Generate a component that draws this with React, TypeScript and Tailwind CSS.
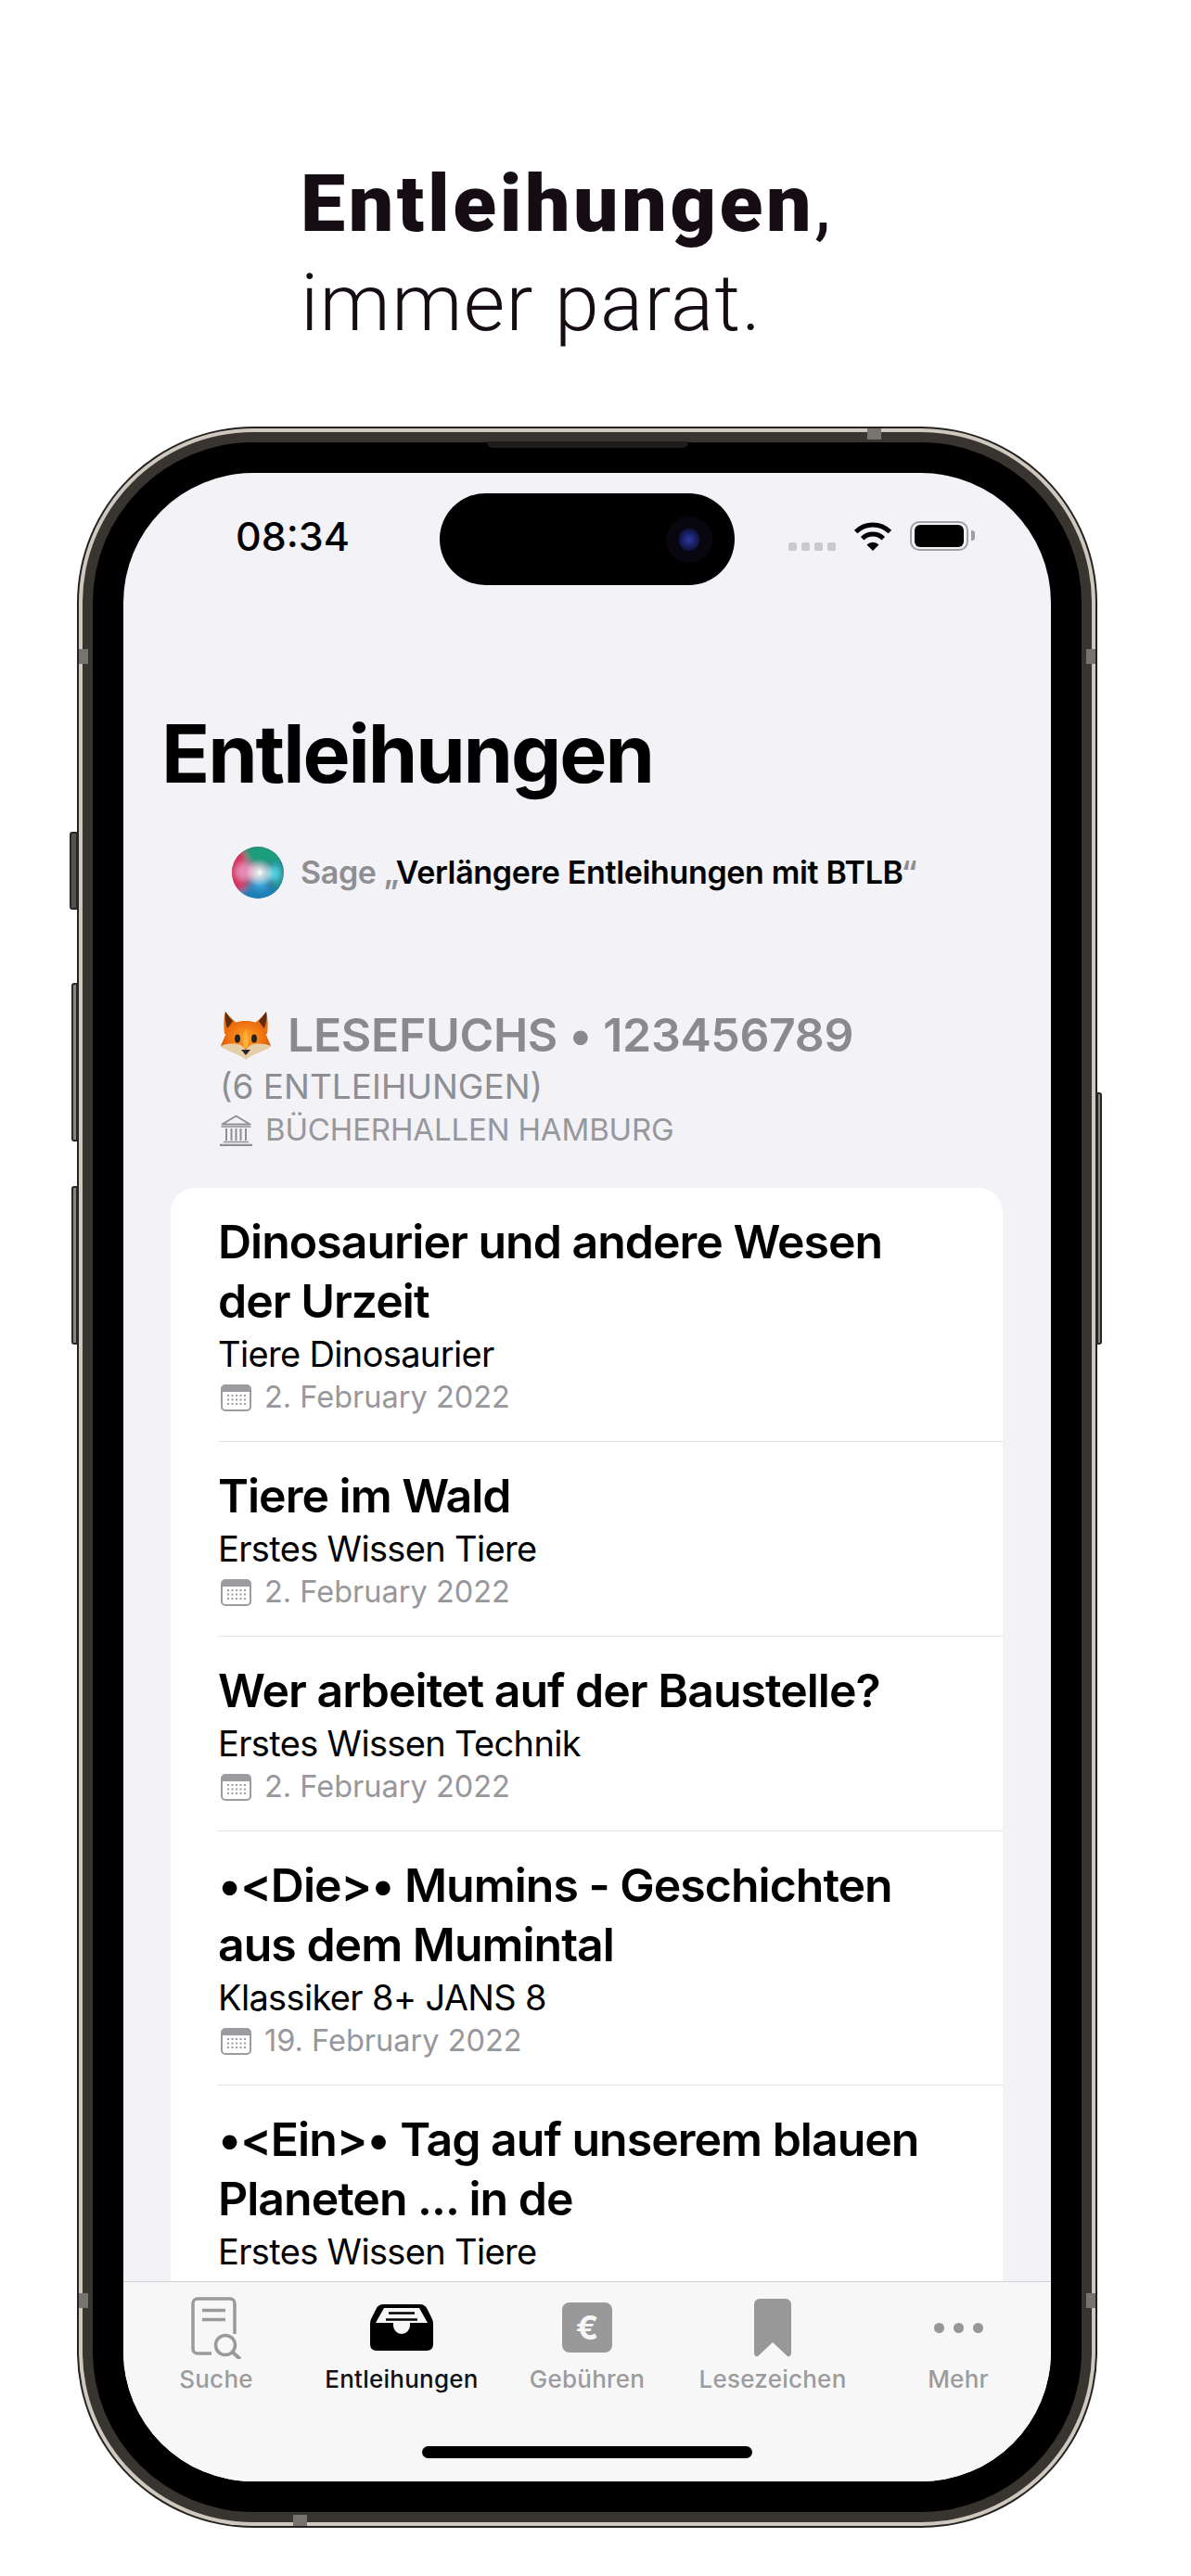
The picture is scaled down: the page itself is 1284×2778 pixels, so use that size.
type Loan = {
  title: string;
  shelf: string;
  date: string;
};

const loans: Loan[] = [
  { title: "Dinosaurier und andere Wesen der Urzeit", shelf: "Tiere Dinosaurier", date: "2. February 2022" },
  { title: "Tiere im Wald", shelf: "Erstes Wissen Tiere", date: "2. February 2022" },
  { title: "Wer arbeitet auf der Baustelle?", shelf: "Erstes Wissen Technik", date: "2. February 2022" },
  { title: "•<Die>• Mumins - Geschichten aus dem Mumintal", shelf: "Klassiker 8+ JANS 8", date: "19. February 2022" },
  { title: "•<Ein>• Tag auf unserem blauen Planeten ... in de", shelf: "Erstes Wissen Tiere", date: "2. February 2022" },
];

const CalendarIcon = () => (
  <svg width="33" height="29" viewBox="0 0 33 29" className="ml-[3px] shrink-0">
    <rect x="1" y="1" width="31" height="27" rx="4" fill="#fff" stroke="#9b9ba0" strokeWidth="2" />
    <path d="M1 5a4 4 0 0 1 4-4h23a4 4 0 0 1 4 4v3H1z" fill="#9b9ba0" />
    {[12, 16.5, 21].map((y) =>
      [8, 12.5, 17, 21.5, 26].map((x) => <rect key={`${x}-${y}`} x={x - 1} y={y - 1} width="2" height="2" fill="#9b9ba0" />),
    )}
  </svg>
);

const BankIcon = () => (
  <svg width="35" height="34" viewBox="0 0 35 34" fill="none" stroke="#8e8e93" className="shrink-0">
    <path d="M2.5 10.5 17.5 1.5l15 9z" strokeWidth="2" strokeLinejoin="round" />
    <path d="M1.5 13h32" strokeWidth="1.5" />
    <path d="M7 15v13M12.5 15v13M17.5 15v13M22.5 15v13M28 15v13" strokeWidth="2" />
    <path d="M4 29.500h27" strokeWidth="1.500" />
    <path d="M0 33h35" strokeWidth="2.500" />
  </svg>
);

const FoxIcon = () => (
  <svg width="56" height="52" viewBox="0 0 56 52" className="shrink-0">
    <defs>
      <radialGradient id="foxHead" cx="50%" cy="42%" r="58%">
        <stop offset="0%" stopColor="#ffa126" />
        <stop offset="65%" stopColor="#ee6f0e" />
        <stop offset="100%" stopColor="#c9500a" />
      </radialGradient>
    </defs>
    <path d="M6 0c3 4 7 8 12 12h20c5-4 9-8 12-12 2 8 2 16 1 24H5C4 16 4 8 6 0z" fill="#e9700f" />
    <path d="M6 0c3 4 5 7 8 10-2 3-4 6-6 8C6 12 5 6 6 0zM50 0c-3 4-5 7-8 10 2 3 4 6 6 8 2-6 3-12 2-18z" fill="#5e2d10" />
    <path d="M28 10c8 0 14 2 18 7 3 5 6 13 9 20-6 5-17 7-27 14C18 44 7 42 1 37c3-7 6-15 9-20 4-5 10-7 18-7z" fill="url(#foxHead)" />
    <path d="M1 37c7-3 15-3 22-1l5 5 5-5c7-2 15-2 22 1-5 5-18 7-27 15C19 44 6 42 1 37z" fill="#e4cfa8" />
    <path d="M28 19c2 5 4 12 2 20h-4c-2-8 0-15 2-20z" fill="#fbb13c" />
    <ellipse cx="19" cy="29" rx="3" ry="4.500" fill="#222" />
    <ellipse cx="37" cy="29" rx="3" ry="4.500" fill="#222" />
    <path d="M23 41h10l-5 6z" fill="#2b2522" />
  </svg>
);

const SiriOrb = () => (
  <svg width="56" height="56" viewBox="0 0 56 56" className="shrink-0">
    <defs>
      <clipPath id="orbClip">
        <circle cx="28" cy="28" r="28" />
      </clipPath>
      <filter id="orbBlur">
        <feGaussianBlur stdDeviation="3" />
      </filter>
      <radialGradient id="orbGlow">
        <stop offset="0%" stopColor="#fff" />
        <stop offset="45%" stopColor="#fff" stopOpacity="0.6" />
        <stop offset="100%" stopColor="#fff" stopOpacity="0" />
      </radialGradient>
    </defs>
    <g clipPath="url(#orbClip)">
      <circle cx="28" cy="28" r="28" fill="#3d5a70" />
      <g filter="url(#orbBlur)">
        <ellipse cx="34" cy="8" rx="24" ry="11" fill="#1f9d7e" />
        <ellipse cx="6" cy="28" rx="12" ry="26" fill="#d5305f" />
        <ellipse cx="30" cy="52" rx="24" ry="10" fill="#1c7fb8" />
        <ellipse cx="50" cy="30" rx="8" ry="16" fill="#1a9c9c" />
        <ellipse cx="15" cy="27" rx="11" ry="10" fill="#e48bb5" />
        <ellipse cx="44" cy="29" rx="8" ry="8" fill="#58cfe0" />
        <ellipse cx="30" cy="40" rx="10" ry="7" fill="#39a3d8" />
      </g>
      <circle cx="30" cy="28" r="15" fill="url(#orbGlow)" />
    </g>
  </svg>
);

const WifiIcon = () => (
  <svg width="42" height="32" viewBox="0 0 42 32" fill="none" stroke="#000" strokeWidth="5">
    <path d="M2.600 11.600A26 26 0 0 1 39.400 11.600" />
    <path d="M9.700 18.700A16 16 0 0 1 32.300 18.700" />
    <path d="M21 32 14.500 25.500a9 9 0 0 1 13 0z" fill="#000" stroke="none" />
  </svg>
);

const DocSearchIcon = () => (
  <svg width="54" height="67" viewBox="0 0 54 67" fill="none" stroke="#9a9a9a" strokeWidth="3.500">
    <path d="M22 61H7a5 5 0 0 1-5-5V7a5 5 0 0 1 5-5h35a5 5 0 0 1 5 5v33" />
    <path d="M12 14.500h25M12 24.500h25" />
    <circle cx="37" cy="52" r="10.500" />
    <path d="M44.500 59.500 53 67" strokeWidth="4" />
  </svg>
);

const TrayIcon = () => (
  <svg width="68" height="50" viewBox="0 0 68 50">
    <path d="M14 0H54c3 0 5 1.500 7 4l6 12q1 2 1 5V43q0 7-7 7H7q-7 0-7-7V21q0-3 1-5L7 4C9 1.500 11 0 14 0z" fill="#000" />
    <path d="M15 4H53L62 20H43v3a9 9 0 0 1-18 0v-3H6z" fill="#f7f7f7" />
    <path d="M20 9.500H48M17 16.500H51" stroke="#000" strokeWidth="2.500" />
  </svg>
);

const BookmarkIcon = () => (
  <svg width="40" height="63" viewBox="0 0 40 63">
    <path d="M6 0H34a6 6 0 0 1 6 6V58q0 5-4 4L20 47 4 62q-4 1-4-4V6a6 6 0 0 1 6-6z" fill="#979897" />
  </svg>
);

const LoanRow = ({ title, shelf, date }: Loan) => (
  <div className="pl-[51px] font-['Inter',sans-serif]">
    <div className="border-b border-[#e2e2e4] pt-[26px] pb-[25px] pr-[90px]">
      <div className="text-[50px] leading-[64px] font-semibold tracking-[-1px] text-black">{title}</div>
      <div className="text-[38px] leading-[50px] tracking-[-0.65px] text-black">{shelf}</div>
      <div className="flex h-[44px] items-center gap-[14px] text-[32.500px] text-[#97979c]">
        <CalendarIcon />
        <span>{date}</span>
      </div>
    </div>
  </div>
);

const TabItem = ({ label, active, children }: { label: string; active?: boolean; children: React.ReactNode }) => (
  <div className="flex flex-col items-center">
    <div className="flex h-[76px] items-center justify-center">{children}</div>
    <div className={`text-[26px] leading-[36px] font-medium tracking-[0.25px] ${active ? "text-[#111]" : "text-[#9c9c9c]"}`}>{label}</div>
  </div>
);

const StatusBar = () => (
  <div className="grid h-[121px] shrink-0 grid-cols-[341px_318px_1fr] pt-[22px]">
    <div className="pt-[21px] pl-[121px] text-[43px] leading-[50px] font-medium text-black">08:34</div>
    <div className="flex h-[99px] items-center justify-end rounded-[50px] bg-black pr-[24px]">
      <div className="flex h-[50px] w-[50px] items-center justify-center rounded-full bg-[#08060f]">
        <div className="h-[24px] w-[22px] rounded-full bg-[radial-gradient(circle,#2c3a9c_0%,#141a55_55%,#08060f_100%)]" />
      </div>
    </div>
    <div className="flex items-start pl-[58px] pt-[30px]">
      <div className="mt-[23px] flex gap-[5px]">
        <div className="h-[9px] w-[9px] rounded-[2px] bg-[#c9c9ce]" />
        <div className="h-[9px] w-[9px] rounded-[2px] bg-[#c9c9ce]" />
        <div className="h-[9px] w-[9px] rounded-[2px] bg-[#c9c9ce]" />
        <div className="h-[9px] w-[9px] rounded-[2px] bg-[#c9c9ce]" />
      </div>
      <div className="ml-[19px]">
        <WifiIcon />
      </div>
      <div className="ml-[19px] flex h-[32px] w-[63px] items-center justify-center rounded-[10px] border-[2px] border-[#a0a0a4]">
        <div className="h-[24px] w-[53px] rounded-[6px] bg-black" />
      </div>
      <div className="ml-[3px] mt-[10px] h-[11px] w-[4px] rounded-r-[3px] bg-[#a0a0a4]" />
    </div>
  </div>
);

const TabBar = () => (
  <div className="h-[216px] shrink-0 border-t border-[#d2d2d4] bg-[#f7f7f7] pt-[11px]">
    <div className="grid grid-cols-5">
      <TabItem label="Suche">
        <DocSearchIcon />
      </TabItem>
      <TabItem label="Entleihungen" active>
        <TrayIcon />
      </TabItem>
      <TabItem label="Gebühren">
        <div className="flex h-[54px] w-[54px] items-center justify-center rounded-[8px] bg-[#999] text-[36px] leading-none font-bold text-[#f7f7f7]">€</div>
      </TabItem>
      <TabItem label="Lesezeichen">
        <BookmarkIcon />
      </TabItem>
      <TabItem label="Mehr">
        <div className="flex gap-[10px]">
          <div className="h-[11px] w-[11px] rounded-full bg-[#979797]" />
          <div className="h-[11px] w-[11px] rounded-full bg-[#979797]" />
          <div className="h-[11px] w-[11px] rounded-full bg-[#979797]" />
        </div>
      </TabItem>
    </div>
    <div className="mx-auto mt-[54px] h-[13px] w-[356px] rounded-full bg-black" />
  </div>
);

const Screen = () => (
  <div className="flex h-[2166px] flex-col overflow-hidden rounded-[140px] bg-[#f2f2f7] font-['Inter',sans-serif]">
    <StatusBar />
    <div className="min-h-0 flex-1 overflow-hidden">
      <h1 className="mt-[132px] pl-[41px] text-[86px] leading-[100px] font-bold tracking-[-2.1px] text-black">Entleihungen</h1>
      <div className="mt-[50px] flex items-center gap-[18px] pl-[117px] text-[34px] leading-[56px] font-semibold tracking-[-0.35px]">
        <SiriOrb />
        <span className="text-[#8e8e93]">
          Sage „<span className="text-black">Verlängere Entleihungen mit BTLB</span>“
        </span>
      </div>
      <div className="mt-[116px] pl-[104px]">
        <div className="flex h-[63px] items-center gap-[17px] text-[50px] font-semibold tracking-[-0.35px] text-[#8a8a8e]">
          <FoxIcon />
          <span>LESEFUCHS • 123456789</span>
        </div>
        <div className="h-[47px] text-[37px] leading-[47px] text-[#8e8e93]">(6 ENTLEIHUNGEN)</div>
        <div className="flex h-[48px] items-center gap-[14px] text-[33px] tracking-[-0.15px] text-[#97979c]">
          <BankIcon />
          <span>BÜCHERHALLEN HAMBURG</span>
        </div>
      </div>
      <div className="mt-[38px] mr-[52px] ml-[51px] overflow-hidden rounded-[26px] bg-white">
        {loans.map((loan) => (
          <LoanRow key={loan.title} {...loan} />
        ))}
      </div>
    </div>
    <TabBar />
  </div>
);

const App = () => {
  return (
    <div className="min-h-[2778px] overflow-hidden bg-white">
      <div className="h-[460px] pt-[166px] pl-[324px] font-['Roboto',sans-serif] text-[86px] leading-[107px] text-[#160c14]">
        <div>
          <span className="font-black tracking-[3.6px]">Entleihungen</span>,
        </div>
        <div className="font-light tracking-[1.3px]">immer parat.</div>
      </div>
      <div className="relative ml-[83px] h-[2266px] w-[1100px]">
        {/* side buttons */}
        <div className="absolute top-[437px] -left-[8px] h-[84px] w-[9px] rounded-l-[3px] border-[2px] border-[#2a2825] bg-[#55514c]" />
        <div className="absolute top-[600px] -left-[6px] h-[171px] w-[7px] rounded-l-[3px] border-[2px] border-[#2a2825] bg-[#8a857e]" />
        <div className="absolute top-[819px] -left-[6px] h-[171px] w-[7px] rounded-l-[3px] border-[2px] border-[#2a2825] bg-[#8a857e]" />
        <div className="absolute top-[718px] -right-[5px] h-[272px] w-[6px] rounded-r-[3px] border-[2px] border-[#2a2825] bg-[#8a857e]" />

        <div className="h-full rounded-[190px] bg-[#24211f] p-[2px]">
          <div className="h-full rounded-[188px] bg-[#cfc8be] p-[4px]">
            <div className="h-full rounded-[184px] bg-[#38342f] p-[11px]">
              <div className="h-full rounded-[173px] bg-black p-[33px]">
                <Screen />
              </div>
            </div>
          </div>
        </div>

        {/* speaker and antenna bands */}
        <div className="absolute top-[16px] left-[442px] h-[7px] w-[217px] rounded-b-[6px] bg-[#1f1d1b]" />
        <div className="absolute top-[2px] left-[852px] h-[12px] w-[15px] bg-[#77736e]" />
        <div className="absolute top-[240px] left-[2px] h-[16px] w-[10px] bg-[#77736e]" />
        <div className="absolute top-[240px] right-[2px] h-[16px] w-[10px] bg-[#77736e]" />
        <div className="absolute top-[2013px] left-[2px] h-[16px] w-[10px] bg-[#77736e]" />
        <div className="absolute top-[2013px] right-[2px] h-[16px] w-[10px] bg-[#77736e]" />
        <div className="absolute bottom-[2px] left-[233px] h-[12px] w-[15px] bg-[#77736e]" />
      </div>
    </div>
  );
};

export default App;
